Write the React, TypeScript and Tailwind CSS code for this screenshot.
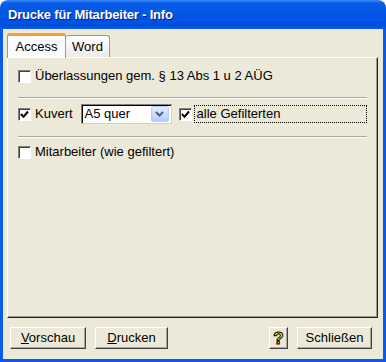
import React from "react";

function Checkbox({ checked }: { checked?: boolean }) {
  return (
    <span className="flex h-[13px] w-[13px] shrink-0 items-center justify-center border border-t-[#808080] border-l-[#808080] border-r-white border-b-white bg-white shadow-[inset_1px_1px_0_#404040]">
      {checked ? (
        <svg width="9" height="9" viewBox="0 0 9 9">
          <path d="M1 4 L3.5 6.8 L8 1.5" fill="none" stroke="#000" strokeWidth="2" />
        </svg>
      ) : null}
    </span>
  );
}

function Separator({ className = "" }: { className?: string }) {
  return <div className={`h-[2px] border-t border-t-[#aca899] border-b border-b-white ${className}`} />;
}

function Button({ children, className = "" }: { children: React.ReactNode; className?: string }) {
  return (
    <button
      type="button"
      className={`flex h-[22px] items-center justify-center border border-t-white border-l-white border-r-[#404040] border-b-[#404040] bg-[#ece9d8] text-[13px] text-black shadow-[inset_-1px_-1px_0_#aca899] ${className}`}
    >
      {children}
    </button>
  );
}

export default function App() {
  return (
    <div className="flex h-[362px] w-[386px] flex-col overflow-hidden rounded-t-[8px] bg-[linear-gradient(to_bottom,#3c8cfc_0px,#0a5ce8_3px,#0055e5_15px,#0050e0_26px,#0a5ce8_29px)] font-['Liberation_Sans',Arial,sans-serif]">
      {/* Title bar */}
      <div className="flex h-[29px] shrink-0 items-center px-[8px] pt-[1px] text-[13px] font-bold tracking-[-0.2px] text-white [text-shadow:1px_1px_0_#0a1e8c]">
        Drucke für Mitarbeiter - Info
      </div>

      {/* Body */}
      <div className="mx-[3px] mb-[3px] flex flex-1 flex-col bg-[#ece9d8] pl-[4px] pr-[5px] pt-[4px]">
        {/* Tabs */}
        <div className="relative z-10 flex h-[24px] items-end">
          <div className="mb-[-1px] flex h-[25px] w-[59px] items-center justify-center rounded-t-[3px] border-x border-x-[#919b9c] border-t-[3px] border-t-[#f0a030] bg-[#fcfcfe] pb-[1px] text-[13px] text-black">
            Access
          </div>
          <div className="flex h-[22px] w-[44px] items-center justify-center rounded-t-[3px] border-r border-t border-r-[#919b9c] border-t-[#919b9c] bg-[linear-gradient(to_bottom,#ffffff,#ecebe6)] text-[13px] text-black">
            Word
          </div>
        </div>

        {/* Panel */}
        <div className="flex h-[261px] flex-col border border-t-white border-l-white border-r-[#222] border-b-[#222] px-[10px] pt-[8px] text-[13px] text-black shadow-[inset_-1px_-1px_0_#9d9a8c]">
          <div className="flex h-[20px] items-center gap-[4px]">
            <Checkbox />
            <span>Überlassungen gem. § 13 Abs 1 u 2 AÜG</span>
          </div>

          <Separator className="mt-[11px]" />

          <div className="mt-[5px] flex h-[20px] items-center">
            <Checkbox checked />
            <span className="ml-[4px]">Kuvert</span>
            <div className="ml-[8px] flex h-[20px] w-[91px] items-center border border-t-[#808080] border-l-[#808080] border-r-[#d4d0c8] border-b-[#d4d0c8] bg-white shadow-[inset_1px_1px_0_#000]">
              <span className="ml-[3px] flex-1">A5 quer</span>
              <span className="mr-[2px] flex h-[16px] w-[18px] items-center justify-center rounded-[2px] border border-[#b9cdf5] bg-[linear-gradient(to_bottom,#e2ebfd,#b6cbf8)]">
                <svg width="9" height="6" viewBox="0 0 9 6">
                  <path d="M1 1 L4.5 4.5 L8 1" fill="none" stroke="#4d6185" strokeWidth="2" />
                </svg>
              </span>
            </div>
            <span className="ml-[7px]">
              <Checkbox checked />
            </span>
            <span className="ml-[2px] flex h-[18px] flex-1 items-center border border-dotted border-black pl-[2px]">
              alle Gefilterten
            </span>
          </div>

          <Separator className="mt-[12px]" />

          <div className="mt-[4px] flex h-[20px] items-center gap-[4px]">
            <Checkbox />
            <span>Mitarbeiter (wie gefiltert)</span>
          </div>
        </div>

        {/* Buttons */}
        <div className="mt-[9px] flex items-center pl-[3px] pr-[6px]">
          <Button className="w-[76px]">
            <span>
              <span className="underline">V</span>orschau
            </span>
          </Button>
          <Button className="ml-[9px] w-[73px]">
            <span>
              <span className="underline">D</span>rucken
            </span>
          </Button>
          <div className="flex-1" />
          <Button className="w-[19px]">
            <span className="text-[17px] font-bold leading-none text-[#ffff00] [-webkit-text-stroke:1px_#000]">?</span>
          </Button>
          <Button className="ml-[9px] w-[75px]">Schließen</Button>
        </div>
      </div>
    </div>
  );
}
